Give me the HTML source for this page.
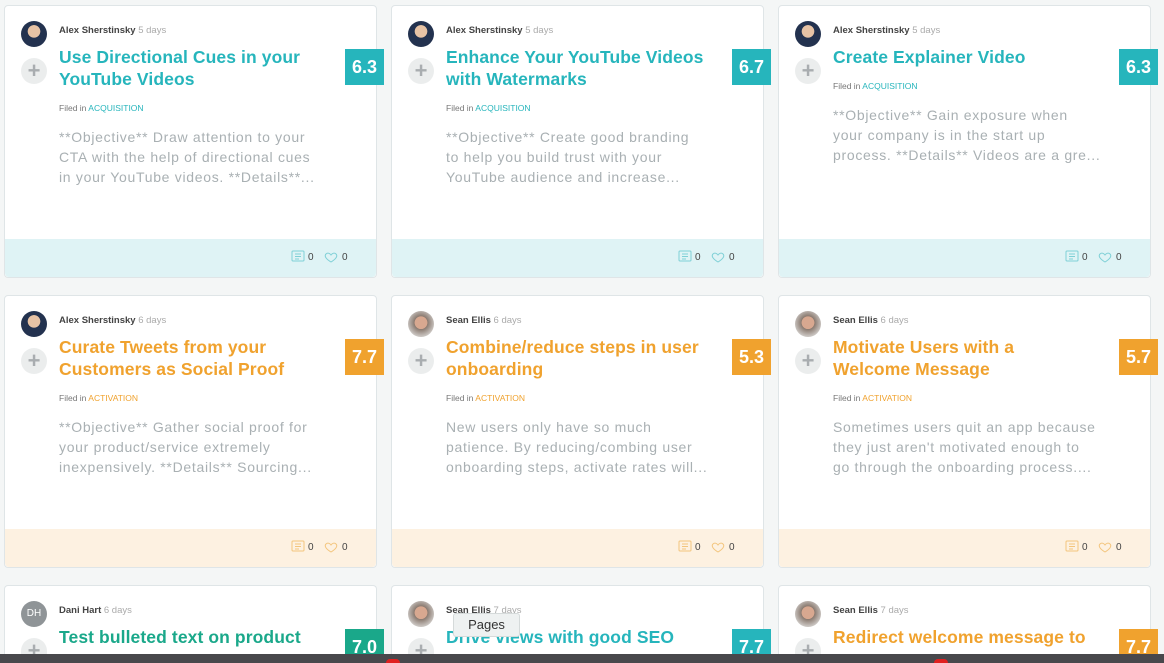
<!DOCTYPE html>
<html><head><meta charset="utf-8"><style>
*{margin:0;padding:0;box-sizing:border-box}
html,body{width:1164px;height:663px;overflow:hidden}
body{background:#f4f6f6;font-family:"Liberation Sans",sans-serif;position:relative}
.card{position:absolute;width:373px;height:273px;background:#fff;border:1px solid #dfe5e7;border-radius:4px;overflow:visible}
.card.r3{height:69px;border-bottom:none;border-radius:4px 4px 0 0}
.av{position:absolute;left:16px;top:15px;width:26px;height:26px;border-radius:50%;background:radial-gradient(circle at 50% 40%,#e7c3a5 0 30%,#23324f 32%);}
.av.se{background:radial-gradient(circle at 50% 45%,#d8a890 0 32%,#8a7a70 34%,#c9c4c0 70%)}
.av.dh{background:#8f9497;color:#fff;font-size:10px;text-align:center;line-height:26px}
.plus{position:absolute;left:16px;top:52px;width:26px;height:26px;border-radius:50%;background:#ebeded;color:#a9adb0;font-size:22px;line-height:25px;text-align:center;font-weight:bold}
.r3 .plus{height:16px;border-radius:13px 13px 0 0;overflow:hidden}
.meta{position:absolute;left:54px;top:19px;font-size:9.5px;color:#444;font-weight:bold}
.meta span{color:#aaa;font-weight:normal}
.t{position:absolute;left:54px;top:40px;width:262px;font-size:17.5px;line-height:22px;font-weight:bold;color:#26b5bc;letter-spacing:.1px}
.r3 .t{height:24px;overflow:hidden}
.o .t{color:#f0a22e}
.g .t{color:#1aa88a}
.sc{position:absolute;left:340px;top:43px;width:39px;height:36px;background:#26b5bc;color:#fff;font-weight:bold;font-size:18px;text-align:center;line-height:36px}
.r3 .sc{height:26px}
.o .sc{background:#f0a22e}
.g .sc{background:#1aa88a}
.f{position:absolute;left:54px;top:97px;font-size:8.5px;color:#777}
.f span{color:#26b5bc}
.o .f span{color:#f0a22e}
.d{position:absolute;left:54px;top:121px;white-space:nowrap;font-size:14px;line-height:20px;color:#a9b0b3;letter-spacing:.7px}
.ft{position:absolute;left:0;right:0;bottom:0;height:38px;background:#dff3f5;border-radius:0 0 4px 4px}
.o .ft{background:#fdf1e1}
.ic{position:absolute;top:10px;font-size:10px;color:#444}
.bar{position:absolute;left:0;top:654px;width:1164px;height:9px;background:#48484c;z-index:5}
.dot{position:absolute;top:659px;width:14px;height:4px;border-radius:7px 7px 0 0;background:#e02020;z-index:6}
.tip{position:absolute;left:453px;top:613px;width:67px;height:24px;background:#eef1f1;border:1px solid #d5dada;border-radius:3px;font-size:13px;color:#333;text-align:center;line-height:22px;z-index:4}
</style></head><body>

<div class="card" style="left:4px;top:5px">
<div class="av"></div><div class="plus">+</div>
<div class="meta">Alex Sherstinsky <span>5 days</span></div>
<div class="t">Use Directional Cues in your YouTube Videos</div><div class="sc">6.3</div>
<div class="f">Filed in <span>ACQUISITION</span></div>
<div class="d">**Objective** Draw attention to your<br>CTA with the help of directional cues<br>in your YouTube videos. **Details**...</div>
<div class="ft"><svg class="ic" style="left:286px" width="60" height="16" viewBox="0 0 60 16"><rect x="1" y="2" width="12" height="10" rx="1" fill="none" stroke="#7fd0d6"/><path d="M4 5h6M4 7.5h6M4 10h4" stroke="#7fd0d6"/><text x="17" y="11" font-size="10" fill="#444" font-family="Liberation Sans">0</text><path d="M40 13c-5-3-7-6-5-8 1.5-1.5 3.5-1 5 1 1.5-2 3.5-2.5 5-1 2 2 0 5-5 8z" fill="none" stroke="#7fd0d6"/><text x="51" y="11" font-size="10" fill="#444" font-family="Liberation Sans">0</text></svg></div>
</div>

<div class="card" style="left:391px;top:5px">
<div class="av"></div><div class="plus">+</div>
<div class="meta">Alex Sherstinsky <span>5 days</span></div>
<div class="t">Enhance Your YouTube Videos with Watermarks</div><div class="sc">6.7</div>
<div class="f">Filed in <span>ACQUISITION</span></div>
<div class="d">**Objective** Create good branding<br>to help you build trust with your<br>YouTube audience and increase...</div>
<div class="ft"><svg class="ic" style="left:286px" width="60" height="16" viewBox="0 0 60 16"><rect x="1" y="2" width="12" height="10" rx="1" fill="none" stroke="#7fd0d6"/><path d="M4 5h6M4 7.5h6M4 10h4" stroke="#7fd0d6"/><text x="17" y="11" font-size="10" fill="#444" font-family="Liberation Sans">0</text><path d="M40 13c-5-3-7-6-5-8 1.5-1.5 3.5-1 5 1 1.5-2 3.5-2.5 5-1 2 2 0 5-5 8z" fill="none" stroke="#7fd0d6"/><text x="51" y="11" font-size="10" fill="#444" font-family="Liberation Sans">0</text></svg></div>
</div>

<div class="card" style="left:778px;top:5px">
<div class="av"></div><div class="plus">+</div>
<div class="meta">Alex Sherstinsky <span>5 days</span></div>
<div class="t">Create Explainer Video</div><div class="sc">6.3</div>
<div class="f" style="top:75px">Filed in <span>ACQUISITION</span></div>
<div class="d" style="top:99px">**Objective** Gain exposure when<br>your company is in the start up<br>process. **Details** Videos are a gre...</div>
<div class="ft"><svg class="ic" style="left:286px" width="60" height="16" viewBox="0 0 60 16"><rect x="1" y="2" width="12" height="10" rx="1" fill="none" stroke="#7fd0d6"/><path d="M4 5h6M4 7.5h6M4 10h4" stroke="#7fd0d6"/><text x="17" y="11" font-size="10" fill="#444" font-family="Liberation Sans">0</text><path d="M40 13c-5-3-7-6-5-8 1.5-1.5 3.5-1 5 1 1.5-2 3.5-2.5 5-1 2 2 0 5-5 8z" fill="none" stroke="#7fd0d6"/><text x="51" y="11" font-size="10" fill="#444" font-family="Liberation Sans">0</text></svg></div>
</div>

<div class="card o" style="left:4px;top:295px">
<div class="av"></div><div class="plus">+</div>
<div class="meta">Alex Sherstinsky <span>6 days</span></div>
<div class="t">Curate Tweets from your Customers as Social Proof</div><div class="sc">7.7</div>
<div class="f">Filed in <span>ACTIVATION</span></div>
<div class="d">**Objective** Gather social proof for<br>your product/service extremely<br>inexpensively. **Details** Sourcing...</div>
<div class="ft"><svg class="ic" style="left:286px" width="60" height="16" viewBox="0 0 60 16"><rect x="1" y="2" width="12" height="10" rx="1" fill="none" stroke="#f3c57d"/><path d="M4 5h6M4 7.5h6M4 10h4" stroke="#f3c57d"/><text x="17" y="11" font-size="10" fill="#444" font-family="Liberation Sans">0</text><path d="M40 13c-5-3-7-6-5-8 1.5-1.5 3.5-1 5 1 1.5-2 3.5-2.5 5-1 2 2 0 5-5 8z" fill="none" stroke="#f3c57d"/><text x="51" y="11" font-size="10" fill="#444" font-family="Liberation Sans">0</text></svg></div>
</div>

<div class="card o" style="left:391px;top:295px">
<div class="av se"></div><div class="plus">+</div>
<div class="meta">Sean Ellis <span>6 days</span></div>
<div class="t">Combine/reduce steps in user onboarding</div><div class="sc">5.3</div>
<div class="f">Filed in <span>ACTIVATION</span></div>
<div class="d">New users only have so much<br>patience. By reducing/combing user<br>onboarding steps, activate rates will...</div>
<div class="ft"><svg class="ic" style="left:286px" width="60" height="16" viewBox="0 0 60 16"><rect x="1" y="2" width="12" height="10" rx="1" fill="none" stroke="#f3c57d"/><path d="M4 5h6M4 7.5h6M4 10h4" stroke="#f3c57d"/><text x="17" y="11" font-size="10" fill="#444" font-family="Liberation Sans">0</text><path d="M40 13c-5-3-7-6-5-8 1.5-1.5 3.5-1 5 1 1.5-2 3.5-2.5 5-1 2 2 0 5-5 8z" fill="none" stroke="#f3c57d"/><text x="51" y="11" font-size="10" fill="#444" font-family="Liberation Sans">0</text></svg></div>
</div>

<div class="card o" style="left:778px;top:295px">
<div class="av se"></div><div class="plus">+</div>
<div class="meta">Sean Ellis <span>6 days</span></div>
<div class="t" style="width:200px">Motivate Users with a Welcome Message</div><div class="sc">5.7</div>
<div class="f">Filed in <span>ACTIVATION</span></div>
<div class="d">Sometimes users quit an app because<br>they just aren't motivated enough to<br>go through the onboarding process....</div>
<div class="ft"><svg class="ic" style="left:286px" width="60" height="16" viewBox="0 0 60 16"><rect x="1" y="2" width="12" height="10" rx="1" fill="none" stroke="#f3c57d"/><path d="M4 5h6M4 7.5h6M4 10h4" stroke="#f3c57d"/><text x="17" y="11" font-size="10" fill="#444" font-family="Liberation Sans">0</text><path d="M40 13c-5-3-7-6-5-8 1.5-1.5 3.5-1 5 1 1.5-2 3.5-2.5 5-1 2 2 0 5-5 8z" fill="none" stroke="#f3c57d"/><text x="51" y="11" font-size="10" fill="#444" font-family="Liberation Sans">0</text></svg></div>
</div>

<div class="card r3 g" style="left:4px;top:585px">
<div class="av dh">DH</div><div class="plus">+</div>
<div class="meta">Dani Hart <span>6 days</span></div>
<div class="t">Test bulleted text on product</div><div class="sc">7.0</div>
</div>
<div class="card r3" style="left:391px;top:585px">
<div class="av se"></div><div class="plus">+</div>
<div class="meta">Sean Ellis <span>7 days</span></div>
<div class="t">Drive views with good SEO</div><div class="sc">7.7</div>
</div>
<div class="card r3 o" style="left:778px;top:585px">
<div class="av se"></div><div class="plus">+</div>
<div class="meta">Sean Ellis <span>7 days</span></div>
<div class="t">Redirect welcome message to</div><div class="sc">7.7</div>
</div>

<div class="tip">Pages</div>
<div class="bar"></div>
<div class="dot" style="left:386px"></div>
<div class="dot" style="left:934px"></div>
</body></html>
